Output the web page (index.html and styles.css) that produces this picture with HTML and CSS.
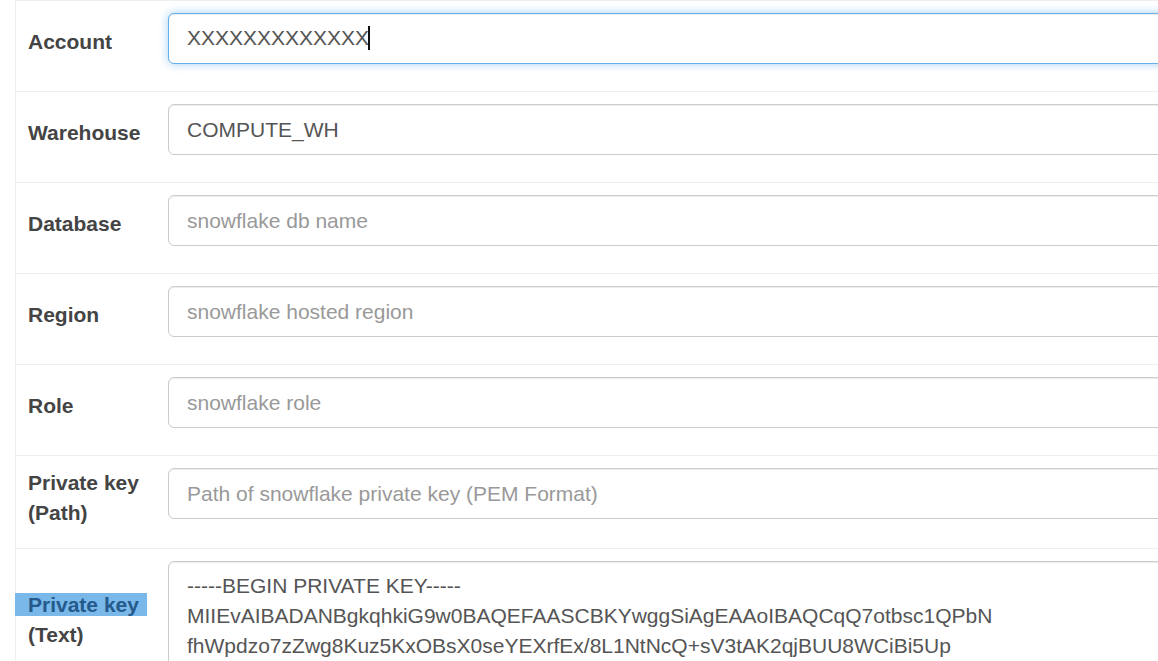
FILE: index.html
```html
<!DOCTYPE html>
<html>
<head>
<meta charset="utf-8">
<link rel="stylesheet" href="styles.css">
</head>
<body>
<div class="form">
  <div class="row">
    <div class="label">Account</div>
    <div class="field"><div class="control focus">XXXXXXXXXXXXX<span class="caret"></span></div></div>
  </div>
  <div class="row">
    <div class="label">Warehouse</div>
    <div class="field"><input class="control" type="text" value="COMPUTE_WH" readonly></div>
  </div>
  <div class="row">
    <div class="label">Database</div>
    <div class="field"><input class="control" type="text" placeholder="snowflake db name" readonly></div>
  </div>
  <div class="row">
    <div class="label">Region</div>
    <div class="field"><input class="control" type="text" placeholder="snowflake hosted region" readonly></div>
  </div>
  <div class="row">
    <div class="label">Role</div>
    <div class="field"><input class="control" type="text" placeholder="snowflake role" readonly></div>
  </div>
  <div class="row">
    <div class="label">Private key<br>(Path)</div>
    <div class="field"><input class="control" type="text" placeholder="Path of snowflake private key (PEM Format)" readonly></div>
  </div>
  <div class="row">
    <div class="label"><div><span class="sel">Private key</span><br>(Text)</div></div>
    <div class="field"><textarea class="control area" readonly>-----BEGIN PRIVATE KEY-----
MIIEvAIBADANBgkqhkiG9w0BAQEFAASCBKYwggSiAgEAAoIBAQCqQ7otbsc1QPbN
fhWpdzo7zZwg8Kuz5KxOBsX0seYEXrfEx/8L1NtNcQ+sV3tAK2qjBUU8WCiBi5Up
</textarea></div>
  </div>
</div>
</body>
</html>
```
FILE: styles.css
```css
html, body {
  margin: 0;
  padding: 0;
  background: #fff;
  overflow: hidden;
}
body {
  font-family: "Liberation Sans", Arial, sans-serif;
  font-size: 21px;
  line-height: 30px;
  color: #444;
}
.form {
  margin-left: 15px;
  width: 1400px;
  border-left: 1px solid #eee;
}
.row {
  display: flex;
  border-top: 1px solid #eee;
}
.label {
  width: 116px;
  flex: none;
  padding: 12px 12px 20px;
  display: flex;
  align-items: center;
  font-weight: bold;
  color: #444;
}
.field {
  flex: 1;
  padding: 12px 12px 20px;
}
.control {
  display: block;
  box-sizing: border-box;
  width: 100%;
  height: 51px;
  margin: 0 0 7px 0;
  padding: 9px 18px;
  font-family: "Liberation Sans", Arial, sans-serif;
  font-size: 21px;
  line-height: 30px;
  color: #555;
  background: #fff;
  border: 1px solid #ccc;
  border-radius: 6px;
  box-shadow: inset 0 1px 1px rgba(0,0,0,0.075);
  outline: none;
}
.control::placeholder {
  color: #999;
}
.control.focus {
  border-color: #66afe9;
  box-shadow: inset 0 1px 1px rgba(0,0,0,0.075), 0 0 10px rgba(102,175,233,0.6);
  white-space: nowrap;
}
.caret {
  display: inline-block;
  width: 2px;
  height: 24px;
  background: #111;
  vertical-align: -5px;
  margin-left: -1px;
}
.area {
  height: 110px;
  resize: none;
  overflow: hidden;
  white-space: pre;
}
.sel {
  white-space: nowrap;
  background: #7ab8ea;
  color: #245a8c;
  padding-left: 13px;
  margin-left: -13px;
  padding-right: 8px;
}
```
